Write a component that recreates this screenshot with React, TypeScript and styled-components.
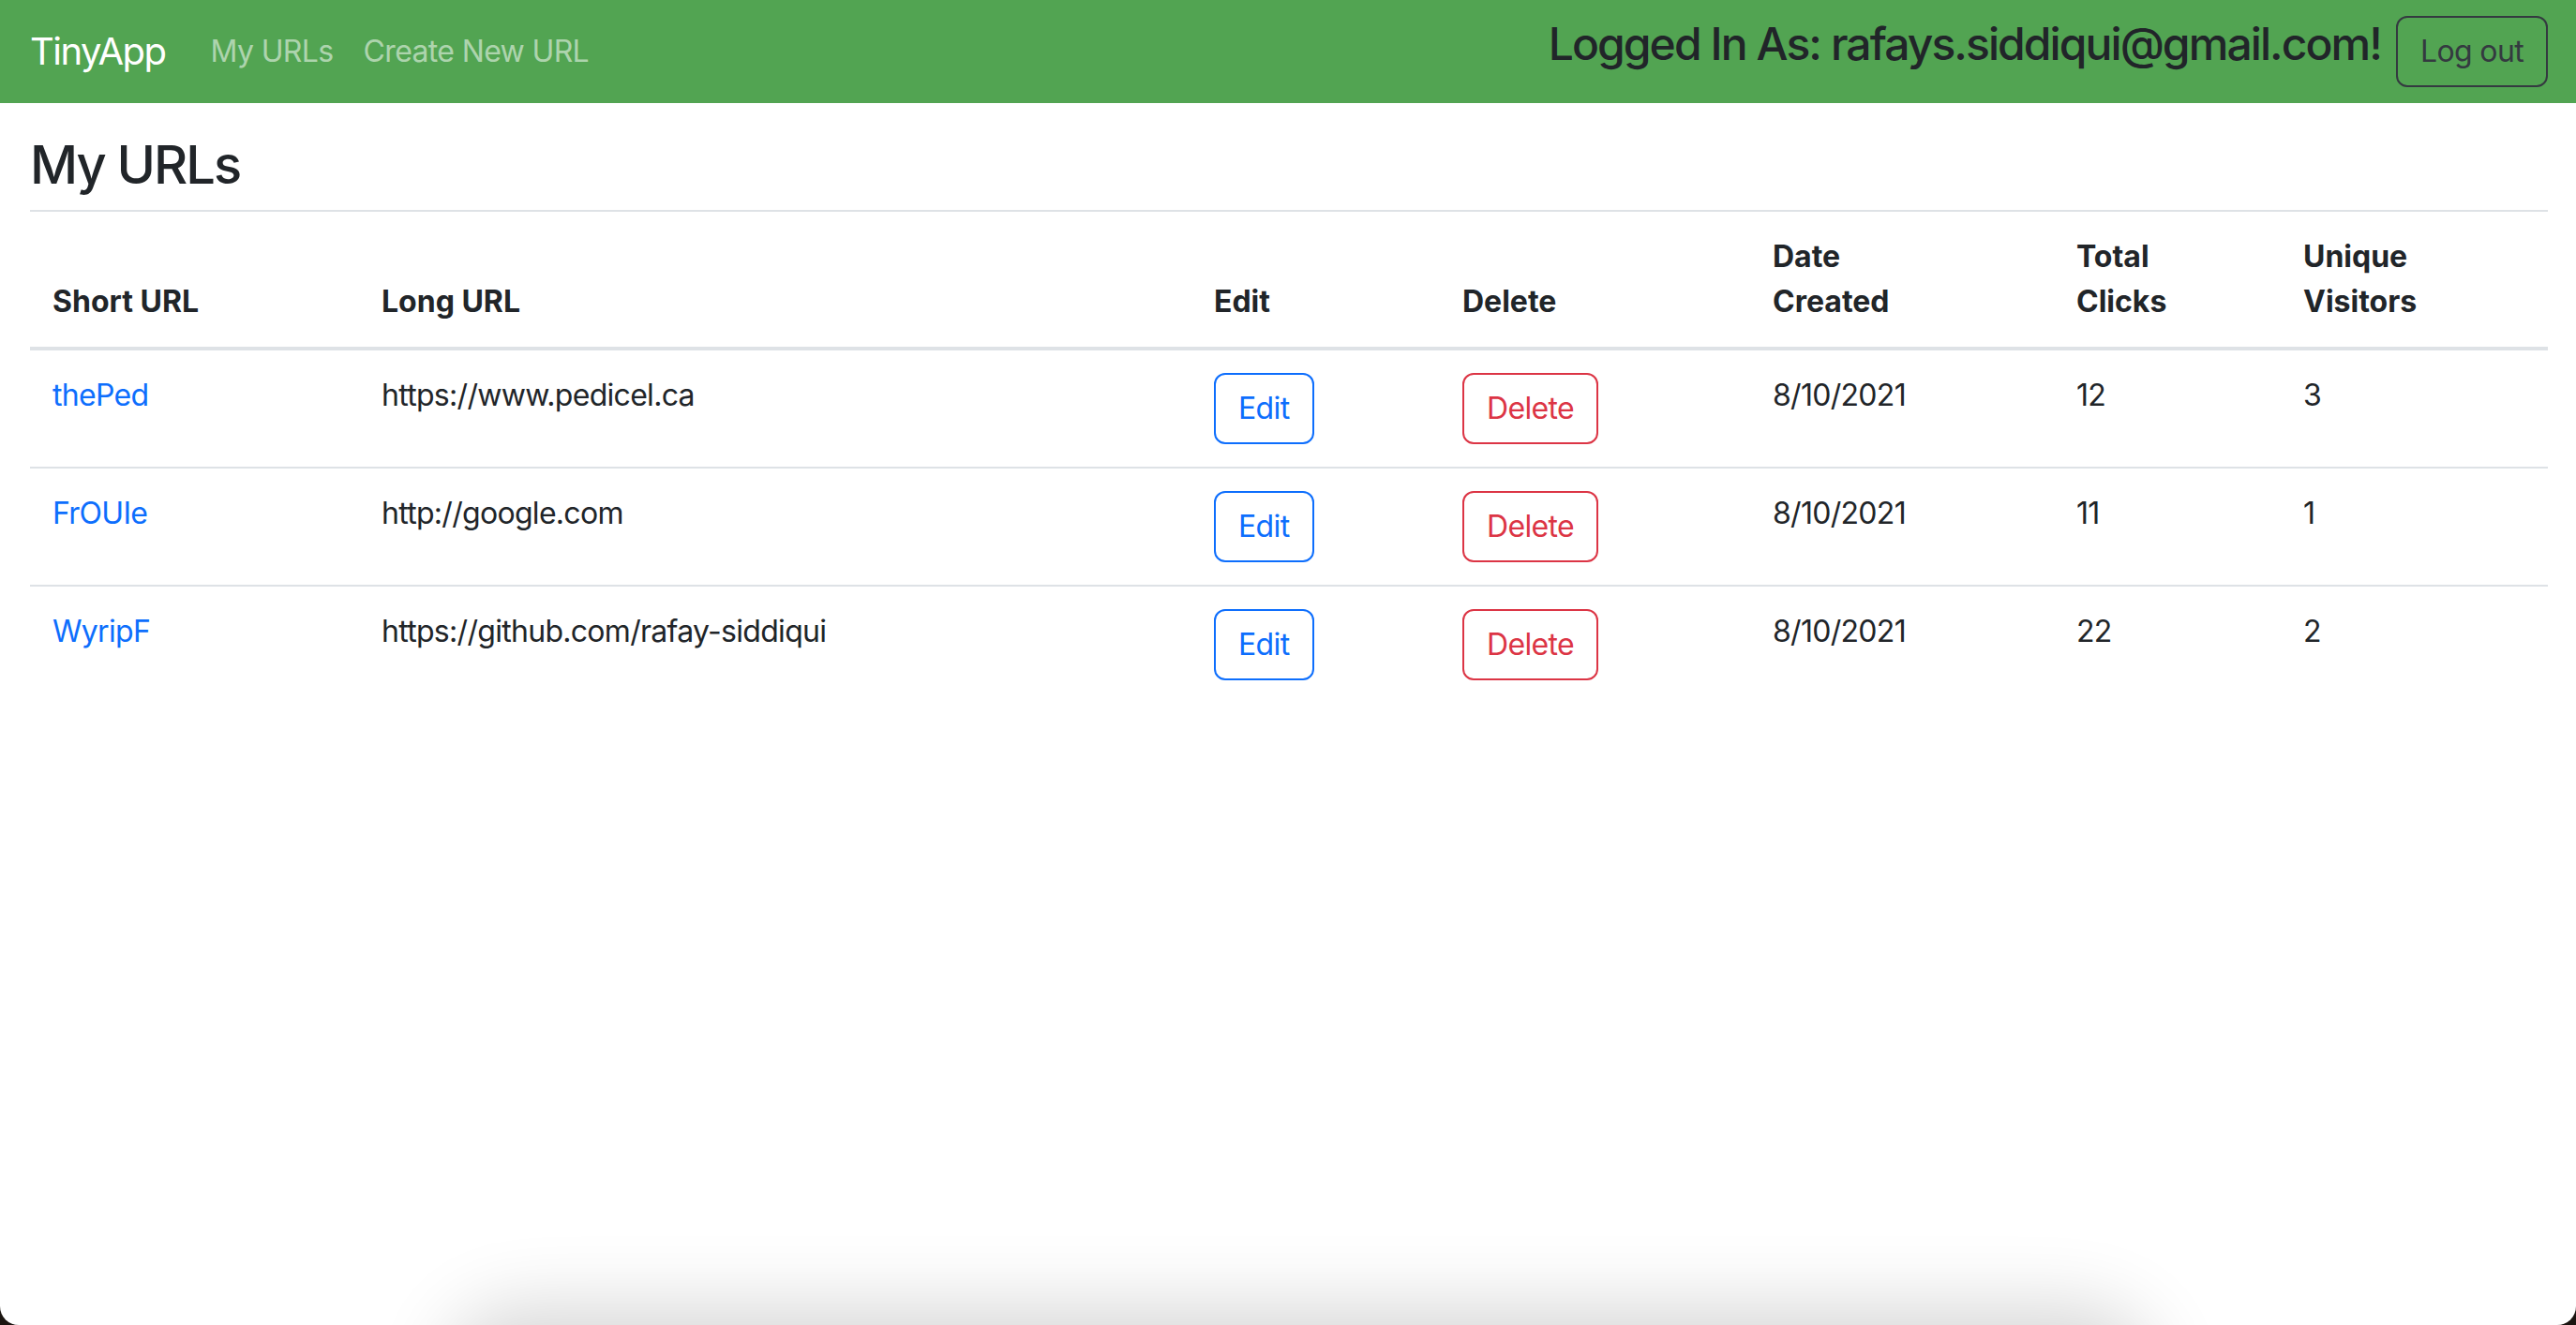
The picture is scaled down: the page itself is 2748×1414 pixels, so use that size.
import React from "react";
import styled, { createGlobalStyle } from "styled-components";

const GlobalStyle = createGlobalStyle`
  *, *::before, *::after { box-sizing: border-box; }
  html, body {
    margin: 0;
    padding: 0;
    background: #1b1511;
  }
  body {
    font-family: Inter, "Noto Sans", "Liberation Sans", sans-serif;
    color: #212529;
    -webkit-font-smoothing: antialiased;
  }
`;

const Frame = styled.div`
  position: relative;
  height: 100vh;
  background: #ffffff;
  border-radius: 0 0 20px 20px;
  overflow: hidden;
  display: flex;
  flex-direction: column;

  &::after {
    content: "";
    position: absolute;
    left: 495px;
    right: 470px;
    bottom: -120px;
    height: 120px;
    border-radius: 60px;
    box-shadow: 0 0 80px 20px rgba(0, 0, 0, 0.16);
    pointer-events: none;
  }
`;

const NavBar = styled.nav`
  flex: none;
  height: 110px;
  background: #52a452;
  display: flex;
  align-items: center;
  padding: 0 30px 0 32px;
`;

const Brand = styled.a`
  font-size: 40px;
  line-height: 60px;
  letter-spacing: -0.037em;
  color: #ffffff;
  text-decoration: none;
  margin-right: 32px;
`;

const NavLinks = styled.div`
  display: flex;
  align-items: center;
`;

const NavLink = styled.a`
  font-size: 32px;
  line-height: 48px;
  letter-spacing: -0.02em;
  padding: 0 16px;
  color: rgba(255, 255, 255, 0.55);
  text-decoration: none;
`;

const Spacer = styled.div`
  flex: 1;
`;

const Greeting = styled.h4`
  margin: 0 0 16px;
  font-size: 48px;
  font-weight: 500;
  line-height: 1.2;
  letter-spacing: -0.04em;
  color: #212529;
`;

const LogoutButton = styled.button`
  margin-left: 16px;
  font-family: inherit;
  font-size: 32px;
  line-height: 48px;
  letter-spacing: -0.02em;
  padding: 12px 24px;
  border: 2px solid #343a40;
  border-radius: 12px;
  background: transparent;
  color: #343a40;
`;

const Main = styled.main`
  padding: 0 30px 0 32px;
`;

const Title = styled.h3`
  margin: 33px 0 14px;
  font-size: 56px;
  font-weight: 500;
  line-height: 1.2;
  letter-spacing: -0.036em;
`;

const Divider = styled.hr`
  margin: 0;
  border: 0;
  height: 2px;
  background: #dee2e6;
`;

const Table = styled.table`
  width: 100%;
  border-collapse: collapse;
  table-layout: fixed;
  font-size: 32px;
  line-height: 48px;
`;

const HeadCell = styled.th<{ $width: number }>`
  width: ${(p) => p.$width}px;
  padding: 24px;
  text-align: left;
  vertical-align: bottom;
  font-weight: 700;
  border-bottom: 4px solid #dee2e6;
`;

const Row = styled.tr`
  &:not(:last-child) > td {
    border-bottom: 2px solid #dee2e6;
  }
`;

const Cell = styled.td`
  padding: 24px;
  vertical-align: top;
  white-space: nowrap;
  letter-spacing: -0.022em;
`;

const ShortLink = styled.a`
  color: #0d6efd;
  text-decoration: none;
`;

const OutlineButton = styled.button<{ $tone: string }>`
  font-family: inherit;
  font-size: 32px;
  line-height: 48px;
  letter-spacing: -0.02em;
  padding: 12px 24px;
  border: 2px solid ${(p) => p.$tone};
  border-radius: 12px;
  background: transparent;
  color: ${(p) => p.$tone};
  display: inline-block;
  vertical-align: top;
`;

const columns: { lines: string[]; width: number }[] = [
  { lines: ["Short URL"], width: 351 },
  { lines: ["Long URL"], width: 888 },
  { lines: ["Edit"], width: 265 },
  { lines: ["Delete"], width: 331 },
  { lines: ["Date", "Created"], width: 324 },
  { lines: ["Total", "Clicks"], width: 242 },
  { lines: ["Unique", "Visitors"], width: 285 },
];

const urls = [
  { short: "thePed", long: "https://www.pedicel.ca", date: "8/10/2021", clicks: 12, visitors: 3 },
  { short: "FrOUIe", long: "http://google.com", date: "8/10/2021", clicks: 11, visitors: 1 },
  { short: "WyripF", long: "https://github.com/rafay-siddiqui", date: "8/10/2021", clicks: 22, visitors: 2 },
];

export default function App() {
  return (
    <>
      <GlobalStyle />
      <Frame>
        <NavBar>
          <Brand href="#">TinyApp</Brand>
          <NavLinks>
            <NavLink href="#">My URLs</NavLink>
            <NavLink href="#">Create New URL</NavLink>
          </NavLinks>
          <Spacer />
          <Greeting>Logged In As: rafays.siddiqui@gmail.com!</Greeting>
          <LogoutButton>Log out</LogoutButton>
        </NavBar>
        <Main>
          <Title>My URLs</Title>
          <Divider />
          <Table>
            <thead>
              <tr>
                {columns.map((c) => (
                  <HeadCell key={c.lines.join(" ")} $width={c.width}>
                    {c.lines.map((l, i) => (
                      <React.Fragment key={l}>
                        {i > 0 && <br />}
                        {l}
                      </React.Fragment>
                    ))}
                  </HeadCell>
                ))}
              </tr>
            </thead>
            <tbody>
              {urls.map((u) => (
                <Row key={u.short}>
                  <Cell>
                    <ShortLink href="#">{u.short}</ShortLink>
                  </Cell>
                  <Cell>{u.long}</Cell>
                  <Cell>
                    <OutlineButton $tone="#0d6efd">Edit</OutlineButton>
                  </Cell>
                  <Cell>
                    <OutlineButton $tone="#dc3545">Delete</OutlineButton>
                  </Cell>
                  <Cell>{u.date}</Cell>
                  <Cell>{u.clicks}</Cell>
                  <Cell>{u.visitors}</Cell>
                </Row>
              ))}
            </tbody>
          </Table>
        </Main>
      </Frame>
    </>
  );
}
